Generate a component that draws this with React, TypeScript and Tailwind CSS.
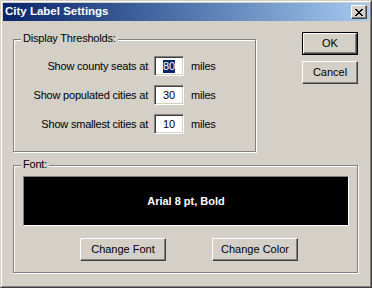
const font = { fontFamily: '"Liberation Sans", Arial, sans-serif' }

function Button({ label, width, isDefault }: { label: string; width: number; isDefault?: boolean }) {
  const face = (
    <div className="flex h-full w-full items-center justify-center border border-t-white border-l-white border-r-[#404040] border-b-[#404040] bg-[#d4d0c8] text-[11px] text-black shadow-[inset_-1px_-1px_0_#808080]">
      {label}
    </div>
  )
  return (
    <div className={isDefault ? 'h-[23px] border border-black' : 'h-[23px]'} style={{ width }}>
      {face}
    </div>
  )
}

function GroupBox({ title, className, children }: { title: string; className: string; children: React.ReactNode }) {
  return (
    <div className={`relative border border-[#808080] shadow-[inset_1px_1px_0_white,1px_1px_0_white] ${className}`}>
      <span className="absolute -top-[8px] left-[7px] bg-[#d4d0c8] px-[2px] text-[11px] leading-[13px] tracking-[-0.2px] text-black">{title}</span>
      {children}
    </div>
  )
}

const rows = [
  { label: 'Show county seats at', value: '80', selected: true },
  { label: 'Show populated cities at', value: '30' },
  { label: 'Show smallest cities at', value: '10' },
]

export default function App() {
  return (
    <div className="h-[288px] w-[372px] border border-t-[#d4d0c8] border-l-[#d4d0c8] border-r-[#404040] border-b-[#404040] bg-[#d4d0c8]" style={font}>
      <div className="h-full w-full border border-t-white border-l-white border-r-[#808080] border-b-[#808080] p-px">
        <div className="flex h-[18px] items-center justify-between bg-gradient-to-r from-[#0a246a] to-[#a6caf0] pl-[2px] pr-[2px]">
          <span className="text-[11.5px] font-bold text-white">City Label Settings</span>
          <div className="flex h-[14px] w-[16px] items-center justify-center border border-t-white border-l-white border-r-[#404040] border-b-[#404040] bg-[#d4d0c8] shadow-[inset_-1px_-1px_0_#808080]">
            <svg width="8" height="7" viewBox="0 0 8 7" shapeRendering="crispEdges">
              <path d="M0 0h2v1h-2zM6 0h2v1h-2zM1 1h2v1h-2zM5 1h2v1h-2zM2 2h4v1h-4zM3 3h2v1h-2zM2 4h4v1h-4zM1 5h2v1h-2zM5 5h2v1h-2zM0 6h2v1h-2zM6 6h2v1h-2z" fill="black" />
            </svg>
          </div>
        </div>

        <div className="pl-[10px]">
          <div className="flex items-start">
            <GroupBox title="Display Thresholds:" className="mt-[18px] h-[113px] w-[243px]">
              <div className="flex flex-col gap-[9px] pt-[16px]">
                {rows.map(r => (
                  <div key={r.label} className="flex items-center text-[11px] tracking-[-0.2px] text-black">
                    <span className="w-[134px] text-right">{r.label}</span>
                    <div className="ml-[6px] flex h-[20px] w-[30px] items-center justify-center border border-t-[#808080] border-l-[#808080] border-r-white border-b-white bg-white shadow-[inset_1px_1px_0_#404040,inset_-1px_-1px_0_#d4d0c8]">
                      {r.selected
                        ? <span className="bg-[#0a246a] leading-[13px] text-white">{r.value}</span>
                        : <span className="leading-[13px]">{r.value}</span>}
                    </div>
                    <span className="ml-[7px]">miles</span>
                  </div>
                ))}
              </div>
            </GroupBox>
            <div className="ml-[46px] mt-[11px] flex flex-col gap-[6px]">
              <Button label="OK" width={56} isDefault />
              <Button label="Cancel" width={56} />
            </div>
          </div>

          <GroupBox title="Font:" className="mt-[13px] h-[108px] w-[345px]">
            <div className="ml-[9px] mt-[10px] flex h-[50px] w-[326px] items-center justify-center border border-t-[#808080] border-l-[#808080] border-r-white border-b-white bg-black text-[11px] font-bold text-white">
              Arial 8 pt, Bold
            </div>
            <div className="ml-[66px] mt-[12px] flex gap-[46px]">
              <Button label="Change Font" width={86} />
              <Button label="Change Color" width={86} />
            </div>
          </GroupBox>
        </div>
      </div>
    </div>
  )
}
